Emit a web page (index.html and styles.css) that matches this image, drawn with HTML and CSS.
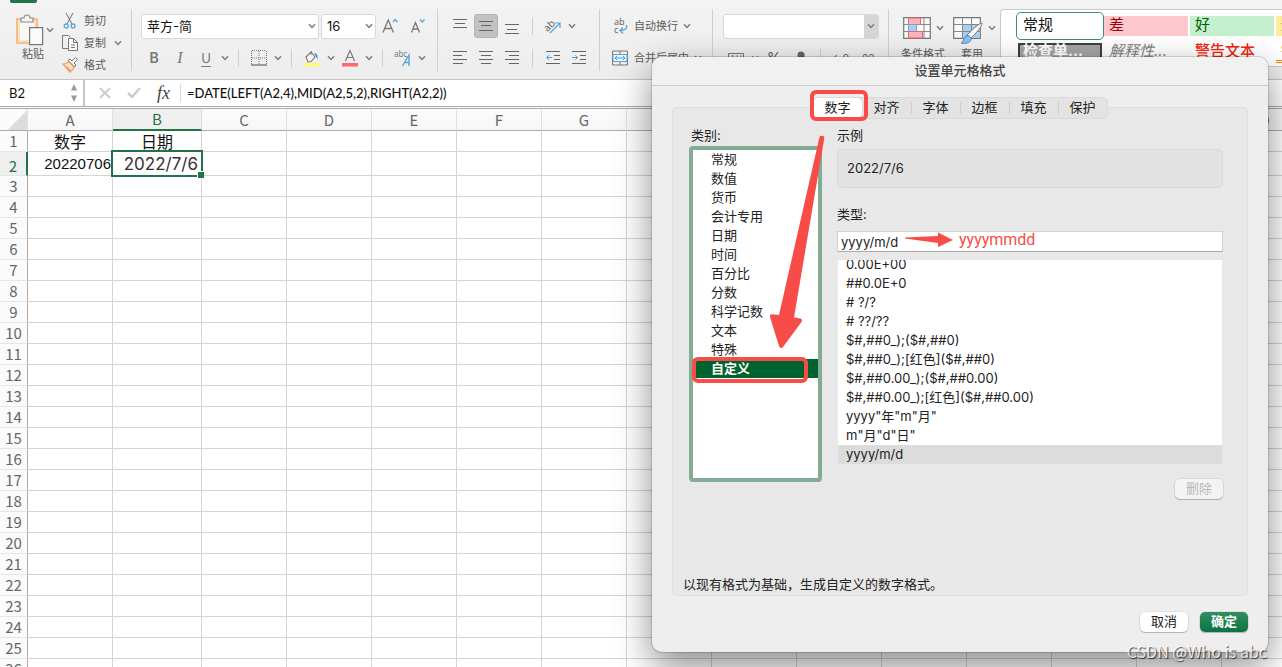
FILE: index.html
```html
<!DOCTYPE html>
<html lang="zh-CN">
<head>
<meta charset="utf-8">
<title>设置单元格格式</title>
<link rel="stylesheet" href="styles.css">
</head>
<body>
<svg class="defs" aria-hidden="true">
  <symbol id="chev" viewBox="0 0 8 6"><path d="M1 1.2 4 4.4 7 1.2" fill="none" stroke="#7c7c7c" stroke-width="1.5"/></symbol>
</svg>
<div class="app">
  <header class="ribbon">
    <span class="active-tab"></span>
    <section class="group clipboard">
      <button class="paste">
        <span class="paste-top">
          <svg width="28" height="32" viewBox="0 0 28 32" fill="none"><path d="M1 5h20v24H1z" fill="#fbe5b8" stroke="#f2b27c" stroke-width="1.6"/><path d="M4 8h14v18H4z" fill="#f7f7f7"/><path d="M5 8V4h3c0-4 6-4 6 0h3v4z" fill="#f7f7f7" stroke="#8a8a8a" stroke-width="1.2"/><path d="M13.600 13.600h13v17h-13z" fill="#fafafa" stroke="#777" stroke-width="1.2"/></svg>
          <svg class="chev"><use href="#chev"/></svg>
        </span>
        <span>粘贴</span>
      </button>
      <div class="clip-list">
        <button><svg width="16" height="18" viewBox="0 0 16 18" fill="none"><path d="M4 1l6 11M11 1 5 12" stroke="#858585" stroke-width="1.1"/><circle cx="4.200" cy="14" r="2" stroke="#5aa5dc" stroke-width="1.300"/><circle cx="11" cy="14" r="2" stroke="#5aa5dc" stroke-width="1.300"/></svg>剪切</button>
        <button><svg width="16" height="18" viewBox="0 0 16 18" fill="none" stroke="#777"><path d="M6 14.500H.5v-13h6l2 2"/><path d="M6.500 4.500h5l4 4v8h-9z" fill="#fafafa"/><path d="M11.500 4.500v4h4M9 11h4M9 13.500h4"/></svg>复制<svg class="chev"><use href="#chev"/></svg></button>
        <button><svg width="16" height="18" viewBox="0 0 16 18" fill="none"><path d="M1 8c3 0 5-1 6-3l5 6c-1 3-3 4-4 5z" fill="#fbe0c0" stroke="#ef9f62" stroke-width="1.2"/><path d="M3 10l3 1 3 4-2 1z" fill="#ef9f62"/><path d="M6 4.500l2-1.500 2 2 3.500-3.500 2 2L12 7l2 2-1.500 2z" fill="#f5f5f5" stroke="#777"/></svg>格式</button>
      </div>
    </section>
    <section class="group font">
      <div class="row boxes">
        <div class="combo family"><select aria-label="字体"><option>苹方-简</option></select><svg class="chev"><use href="#chev"/></svg></div>
        <div class="combo size"><select aria-label="字号"><option>16</option></select><svg class="chev"><use href="#chev"/></svg></div>
        <button class="ib" aria-label="增大字号"><svg width="18" height="18" viewBox="0 0 18 18" fill="none"><path d="M1 15.500 6.200 3l5.200 12.500M3 11.500h6.600" stroke="#7a7a7a" stroke-width="1.300"/><path d="M11 5l2.200-2.500L15.500 5" stroke="#5aa5dc" stroke-width="1.300"/></svg></button>
        <button class="ib" aria-label="减小字号"><svg width="18" height="18" viewBox="0 0 18 18" fill="none"><path d="M1.500 15.500 5.500 5.500l4 10M3 12h5" stroke="#7a7a7a" stroke-width="1.300"/><path d="M10 2.500 12.200 5l2.300-2.500" stroke="#5aa5dc" stroke-width="1.300"/></svg></button>
      </div>
      <div class="row">
        <button class="ib b">B</button><button class="ib i">I</button><button class="ib u">U</button><svg class="chev"><use href="#chev"/></svg>
        <span class="sep"></span>
        <button class="ib" aria-label="边框"><svg width="16" height="16" viewBox="0 0 16 16" fill="none" stroke="#777"><path d="M1 .5h14M.5 1v14M15.500 1v14M8 1v14M1 8h14" stroke-dasharray="1 1"/><path d="M0 15h16" stroke-width="1.400"/></svg></button><svg class="chev"><use href="#chev"/></svg>
        <span class="sep"></span>
        <button class="ib" aria-label="填充颜色"><svg width="18" height="18" viewBox="0 0 18 18" fill="none"><path d="M3 8l5-5 4 5-4 4.500-3 .5z" fill="#f7f7f7" stroke="#777" stroke-width="1.100"/><path d="M8 6V2" stroke="#777"/><path d="M11 4c3 0 4 3 3.500 6-1-1-2-3-3.500-6z" fill="#4f94c9"/><path d="M1 14h16v3.500H1z" fill="#fdf97a"/></svg></button><svg class="chev"><use href="#chev"/></svg>
        <button class="ib" aria-label="字体颜色"><svg width="18" height="18" viewBox="0 0 18 18" fill="none"><path d="M4.500 12 9 1.500 13.500 12M6 8.500h6" stroke="#7a7a7a" stroke-width="1.200"/><path d="M1 14h16v3.500H1z" fill="#fb6a6f"/></svg></button><svg class="chev"><use href="#chev"/></svg>
        <span class="sep"></span>
        <button class="ib" aria-label="拼音"><svg width="18" height="18" viewBox="0 0 18 18"><text x="0" y="8" class="t-abc">abc</text><path d="M8.500 17 15 6v11M10.500 13.500H15" fill="none" stroke="#5aa5dc" stroke-width="1.400"/></svg></button><svg class="chev"><use href="#chev"/></svg>
      </div>
    </section>
    <section class="group align">
      <div class="row">
        <button class="ib" aria-label="顶端对齐"><svg width="14" height="16" viewBox="0 0 14 16" stroke="#666"><path d="M0 1.500h14M2 5.500h10M0 9.500h14"/></svg></button>
        <button class="ib on" aria-label="垂直居中"><svg width="14" height="16" viewBox="0 0 14 16" stroke="#666"><path d="M0 3.500h14M2 7.500h10M0 12.500h14"/></svg></button>
        <button class="ib" aria-label="底端对齐"><svg width="14" height="16" viewBox="0 0 14 16" stroke="#666"><path d="M0 6.500h14M2 11.500h10M0 15.500h14"/></svg></button>
        <span class="sep"></span>
        <button class="ib" aria-label="方向"><svg width="18" height="18" viewBox="0 0 18 18"><text x="1" y="13" class="t-rot" transform="rotate(-45 5 11)">ab</text><path d="M6 16 15.500 6.500M11 6h5v5" fill="none" stroke="#5aa5dc" stroke-width="1.200"/></svg></button><svg class="chev"><use href="#chev"/></svg>
      </div>
      <div class="row">
        <button class="ib" aria-label="左对齐"><svg width="14" height="16" viewBox="0 0 14 16" stroke="#666"><path d="M0 1.500h14M0 5.500h9M0 9.500h14M0 13.500h10"/></svg></button>
        <button class="ib" aria-label="居中"><svg width="14" height="16" viewBox="0 0 14 16" stroke="#666"><path d="M0 1.500h14M2 5.500h10M0 9.500h14M2 13.500h10"/></svg></button>
        <button class="ib" aria-label="右对齐"><svg width="14" height="16" viewBox="0 0 14 16" stroke="#666"><path d="M0 1.500h14M4 5.500h10M0 9.500h14M4 13.500h10"/></svg></button>
        <span class="sep"></span>
        <button class="ib" aria-label="减少缩进"><svg width="14" height="16" viewBox="0 0 14 16" fill="none" stroke="#666"><path d="M0 1.500h14M8 5.500h6M8 9.500h6M0 13.500h14"/><path d="M.8 7.500h5.500M3 5.200.8 7.500 3 9.800" stroke="#4b9bd8"/></svg></button>
        <button class="ib" aria-label="增加缩进"><svg width="14" height="16" viewBox="0 0 14 16" fill="none" stroke="#666"><path d="M0 1.500h14M8 5.500h6M8 9.500h6M0 13.500h14"/><path d="M0 7.500h5.500M3.300 5.200l2.200 2.300-2.200 2.300" stroke="#4b9bd8"/></svg></button>
      </div>
    </section>
    <section class="group wrap">
      <div class="row"><button class="lb"><svg width="16" height="18" viewBox="0 0 16 18"><text x="2" y="8" class="t-wrap">ab</text><text x="2" y="16" class="t-wrap">c</text><path d="M14.500 8c1 4-2 5.500-6.500 5.500M11 10.500l-3 3 3 3" fill="none" stroke="#5aa5dc" stroke-width="1.300"/></svg>自动换行</button><svg class="chev"><use href="#chev"/></svg></div>
      <div class="row"><button class="lb"><svg width="16" height="16" viewBox="0 0 16 16" fill="none"><path d="M.5 1h15v14H.5zM8 1v3M8 12v3" stroke="#777"/><path d="M1 4.500h14v7H1z" fill="#eef6fc" stroke="#5aa5dc"/><path d="M3 8h10M5 6 3 8l2 2M11 6l2 2-2 2" stroke="#4b9bd8"/></svg>合并后居中</button><svg class="chev"><use href="#chev"/></svg></div>
    </section>
    <section class="group number">
      <div class="row"><div class="combo fmt"><select aria-label="数字格式"><option></option></select><span class="drop"><svg class="chev"><use href="#chev"/></svg></span></div></div>
      <div class="row">
        <button class="ib" aria-label="货币"><svg width="16" height="12" viewBox="0 0 16 12" fill="none" stroke="#777"><path d="M.5 1.500h15v9H.5z"/><path d="M3 4h3M8 4h2M12 4h2M3 7h10"/></svg></button><svg class="chev"><use href="#chev"/></svg>
        <button class="ib pct">%</button><button class="ib" aria-label="千位分隔"><svg width="12" height="16" viewBox="0 0 12 16"><circle cx="7" cy="5" r="3.500" fill="#666"/><path d="M10.500 5c0 5-3 7-5 8 2-3 2-4 1.500-6z" fill="#666"/></svg></button>
        <span class="sep"></span>
        <button class="ib dec"><svg width="10" height="10" viewBox="0 0 10 10" fill="none" stroke="#5aa5dc" stroke-width="1.300"><path d="M1 5h8M4 2 1 5l3 3"/></svg>0</button><button class="ib dec">.00</button>
      </div>
    </section>
    <section class="group cond">
      <button class="big"><span class="paste-top"><svg width="28" height="22" viewBox="0 0 28 22" fill="none"><path d="M.7.7h26.600v20.600H.7z" fill="#fafafa" stroke="#777" stroke-width="1.200"/><path d="M0 7.500h28M0 14.500h28M21 0v22M5.500 0v22" stroke="#888"/><path d="M5.500 1h12v6.500h-12z" fill="#ffb3bb" stroke="#e8657a"/><path d="M5.500 7.500h8v7h-8z" fill="#a9cff0" stroke="#6aa6dc"/><path d="M5.500 14.500h14V21h-14z" fill="#ffb3bb" stroke="#e8657a"/></svg><svg class="chev"><use href="#chev"/></svg></span><span>条件格式</span></button>
      <button class="big"><span class="paste-top"><svg width="30" height="27" viewBox="0 0 30 27" fill="none"><path d="M.7.7h26.600v20.600H.7z" fill="#fafafa" stroke="#777" stroke-width="1.200"/><path d="M9 7.500h18V21H9z" fill="#a9cff0"/><path d="M0 7.500h28M0 14.500h28M18.500 0v22M9.500 0v22" stroke="#888"/><path d="M14 18C19 13 25 7 29 6c0 4-6 10-11 15z" fill="#fafafa" stroke="#777"/><path d="M8 26c3-1 2-5 5-7 3-1 6 1 5 4s-6 4-10 3z" fill="#8fc0ea" stroke="#4b8fc9"/></svg><svg class="chev"><use href="#chev"/></svg></span><span>套用</span></button>
    </section>
    <section class="gallery">
      <button class="st normal">常规</button><button class="st bad">差</button><button class="st good">好</button><button class="st neutral">适中</button>
      <button class="st low check">检查单...</button><button class="st low explain">解释性...</button><button class="st low warn">警告文本</button><button class="st low link">链接</button>
    </section>
  </header>

  <div class="formula-bar">
    <div class="name-box"><input aria-label="名称框" value="B2"><svg width="8" height="18" viewBox="0 0 8 18" fill="#9a9a9a"><path d="M1 6.500 4 0l3 6.500zM1 11.500 4 18l3-6.500z"/></svg></div>
    <div class="fx-icons">
      <svg width="12" height="12" viewBox="0 0 12 12" fill="none" stroke="#cdcdcd" stroke-width="2"><path d="M1 1l10 10M11 1 1 11"/></svg>
      <svg width="14" height="12" viewBox="0 0 14 12" fill="none" stroke="#cdcdcd" stroke-width="2.500"><path d="M1 6l4 4 8-9"/></svg>
      <span class="fx">fx</span>
    </div>
    <input class="formula" aria-label="公式" value="=DATE(LEFT(A2,4),MID(A2,5,2),RIGHT(A2,2))">
  </div>

  <main class="sheet">
    <table class="grid"><colgroup id="cols"></colgroup><thead id="head"></thead><tbody id="body"></tbody></table>
  </main>
</div>

<div class="dialog" role="dialog" aria-labelledby="dlg-title">
  <h1 class="dlg-title" id="dlg-title">设置单元格格式</h1>
  <div class="dlg-body">
    <nav class="tabs">
      <button class="tab active">数字</button><button class="tab">对齐</button><button class="tab">字体</button><button class="tab">边框</button><button class="tab">填充</button><button class="tab">保护</button>
    </nav>
    <div class="panel">
      <div class="cols">
        <section class="cat">
          <h2>类别:</h2>
          <ul class="cat-list">
            <li>常规</li><li>数值</li><li>货币</li><li>会计专用</li><li>日期</li><li>时间</li><li>百分比</li><li>分数</li><li>科学记数</li><li>文本</li><li>特殊</li><li class="sel">自定义</li>
          </ul>
        </section>
        <section class="detail">
          <h2>示例</h2>
          <div class="sample">2022/7/6</div>
          <label for="type">类型:</label>
          <input id="type" class="type" value="yyyy/m/d">
          <ul class="fmt-list">
            <li>0.00E+00</li><li>##0.0E+0</li><li># ?/?</li><li># ??/??</li><li>$#,##0_);($#,##0)</li><li>$#,##0_);[红色]($#,##0)</li><li>$#,##0.00_);($#,##0.00)</li><li>$#,##0.00_);[红色]($#,##0.00)</li><li>yyyy"年"m"月"</li><li>m"月"d"日"</li><li class="sel">yyyy/m/d</li>
          </ul>
          <button class="btn" disabled>删除</button>
        </section>
      </div>
      <p class="note">以现有格式为基础，生成自定义的数字格式。</p>
    </div>
    <footer class="actions"><button class="btn">取消</button><button class="btn primary">确定</button></footer>
  </div>
  <span class="mark mark-tab"></span>
  <span class="mark mark-item"></span>
  <svg class="arrows" width="616" height="596" viewBox="652 57 616 596" fill="#f74c47" aria-hidden="true">
    <path d="M819.500 137q.3-1.500 2-1.300l1.500.3q1.500.4 1.300 2L794 317.500l6.500 1q2.500 1 1 3.500L783 347q-2.500 2.500-4-1L770 317q-.5-2.500 2-2.700l7 .7z"/>
    <path d="M905 238.500v-1l33-1.500v-3.500l15 7.500-15 7v-4z"/>
  </svg>
  <span class="hint">yyyymmdd</span>
</div>
<span class="watermark">CSDN @Who is abc</span>
<script src="grid.js"></script>
</body>
</html>
```
FILE: grid.js
```js
const letters = [...'ABCDEFGHIJKLMNO'];
const values = { A1: '数字', B1: '日期', A2: '20220706', B2: '2022/7/6' };

document.getElementById('cols').innerHTML =
  '<col class="c-head">' + letters.map(l => `<col class="${l === 'B' ? 'c-b' : 'c'}">`).join('');
document.getElementById('head').innerHTML =
  '<tr><th class="corner"></th>' +
  letters.map(l => `<th class="${l === 'B' ? 'current' : ''}">${l}</th>`).join('') + '</tr>';

let rows = '';
for (let r = 1; r <= 26; r++) {
  rows += `<tr class="${r === 2 ? 'current' : ''}"><th>${r}</th>`;
  for (const l of letters) {
    const id = l + r;
    rows += `<td class="${values[id] ? 'v-' + id.toLowerCase() : ''}">${values[id] || ''}</td>`;
  }
  rows += '</tr>';
}
document.getElementById('body').innerHTML = rows;
```
FILE: styles.css
```css
* { box-sizing: border-box; }
body {
  margin: 0;
  height: 100vh;
  overflow: hidden;
  position: relative;
  font: 13px/19px Inter, "Noto Sans CJK SC", sans-serif;
  color: #222;
}
button, input, select { font: inherit; color: inherit; margin: 0; padding: 0; border: 0; background: none; appearance: none; }
svg { display: block; flex: none; overflow: visible; }
ul { list-style: none; margin: 0; padding: 0; }
.defs { position: absolute; width: 0; height: 0; }
.app { display: flex; flex-direction: column; height: 100vh; overflow: hidden; }

/* ribbon */
.ribbon {
  position: relative;
  flex: none;
  display: flex;
  align-items: flex-start;
  height: 80px;
  padding-top: 9px;
  background: linear-gradient(#f3f3f3, #ededed);
  border-bottom: 1px solid #c4c4c4;
  font-size: 11px;
  line-height: 16px;
  color: #5c5c5c;
  overflow: hidden;
}
.active-tab { position: absolute; top: 0; left: 10px; width: 27px; height: 3px; background: #217346; border-radius: 0 0 2px 2px; }
.group { flex: none; height: 62px; padding-top: 1px; padding-left: 9px; border-right: 1px solid #cfcfcf; }
.row { display: flex; align-items: center; height: 32px; }
.chev { width: 12px; height: 6px; }
.ib { width: 26px; height: 24px; display: flex; align-items: center; justify-content: center; flex: none; }
.sep { flex: none; width: 1px; height: 18px; margin: 0 7px; background: #cfcfcf; }
.clipboard { width: 132px; padding-left: 16px; display: flex; gap: 5px; }
.paste { width: 41px; display: flex; flex-direction: column; align-items: flex-start; padding-top: 4px; }
.paste > span:last-child { padding-left: 6px; }
.paste-top { display: flex; align-items: center; }
.clip-list { display: flex; flex-direction: column; }
.clip-list button { display: flex; flex: none; align-items: center; gap: 6px; height: 22px; }
.font { width: 306px; }
.boxes { gap: 2px; }
.combo { position: relative; display: flex; align-items: center; height: 25px; background: #fff; border: 1px solid #d9d9d9; border-radius: 3px; font-size: 13px; color: #111; }
.combo select { flex: 1; min-width: 0; height: 23px; padding-left: 5px; }
.combo.family { width: 178px; }
.combo.size { width: 55px; }
.b { font-size: 14px; font-weight: 600; color: #777; }
.i { font: italic 16px "Liberation Serif", serif; color: #777; }
.u { font-size: 13px; color: #777; text-decoration: underline; text-underline-offset: 3px; }
.t-abc { font: 8px "Noto Sans", sans-serif; fill: #777; }
.t-rot { font: 10px "Noto Sans", sans-serif; fill: #666; }
.t-wrap { font: 9px/8px "Noto Sans", sans-serif; fill: #666; }
.align { width: 162px; }
.on { width: 24px; margin: 0 1px; background: #c2c2c2; border: 1px solid #b5b5b5; border-radius: 3px; }
.wrap { width: 113px; padding-left: 12px; }
.lb { display: flex; align-items: center; gap: 6px; }
.wrap .chev { margin-left: 3px; }
.number { width: 176px; padding-left: 10px; }
.combo.fmt { width: 156px; }
.drop { display: flex; align-items: center; justify-content: center; width: 14px; height: 23px; background: #d6d6d6; border-radius: 0 2px 2px 0; }
.drop .chev { width: 10px; }
.pct { font-size: 15px; }
.dec { font-size: 10px; }
.cond { width: 111px; padding: 8px 0 0 12px; display: flex; gap: 8px; border-right: 0; }
.big { display: flex; flex-direction: column; width: 42px; white-space: nowrap; }
.big .paste-top { height: 22px; gap: 3px; padding-left: 2px; align-items: flex-start; }
.big .paste-top .chev { margin-top: 8px; }
.big > span:last-child { padding-top: 7px; width: 42px; text-align: center; }
.gallery {
  flex: 1;
  display: grid;
  grid-template-columns: repeat(4, 84px);
  grid-template-rows: 20px 20px;
  gap: 7px 2px;
  height: 58px;
  padding: 6px 0 0 17px;
  background: #fff;
  border: 1px solid #c9c9c9;
  border-right: 0;
  border-radius: 4px 0 0 0;
  overflow: hidden;
  font-size: 15px;
  line-height: 16px;
}
.st { text-align: left; padding: 0 0 2px 5px; white-space: nowrap; }
.st.low { padding-bottom: 4px; }
.normal { color: #111; outline: 1px solid #3f8f63; outline-offset: 3px; background: #fff; border-radius: 1px; margin: 0 2px; padding-left: 3px; }
.bad { background: #ffc7ce; color: #9c0006; }
.good { background: #c6efce; color: #006100; }
.neutral { background: #ffeb9c; color: #9c5700; }
.check { background: #a5a5a5; color: #fff; font-weight: 700; border: 2px solid #3f3f3f; padding-left: 3px; line-height: 12px; }
.explain { color: #7f7f7f; font-style: italic; }
.warn { color: #f2230c; font-weight: 500; }
.link { color: #fa7d00; border-bottom: 3px double #ff8001; }

/* formula bar */
.formula-bar { flex: none; display: flex; height: 29px; background: #fff; border-bottom: 3px double #a9a9a9; font: 13px/19px Lato, sans-serif; color: #111; }
.name-box { flex: none; display: flex; align-items: center; width: 85px; padding: 0 5px 0 9px; border-right: 2px solid #c6c6c6; }
.name-box input { flex: 1; min-width: 0; }
.fx-icons { flex: none; display: flex; align-items: center; gap: 16px; width: 96px; margin: 4px 6px 4px 0; padding-left: 14px; border-right: 1px solid #d9d9d9; }
.fx { font: italic 18px/18px "Liberation Serif", serif; color: #444; }
.formula { flex: 1; min-width: 0; font-weight: 500; }

/* sheet */
.sheet { flex: 1; min-height: 0; overflow: hidden; background: #fff; }
.grid { table-layout: fixed; width: 1307px; border-collapse: separate; border-spacing: 0; font: 15px/20px "Noto Sans CJK SC", sans-serif; }
.c-head { width: 28px; }
.c { width: 85px; }
.c-b { width: 89px; }
.grid th, .grid td { padding: 0; height: 21px; border-right: 1px solid #d4d4d4; border-bottom: 1px solid #d4d4d4; line-height: 20px; white-space: nowrap; }
.grid th { font-weight: 400; color: #666; background: #fbfbfb; }
.grid thead th { height: 22px; border-bottom-color: #ababab; border-right-color: #e0e0e0; background: linear-gradient(#fbfbfb, #f7f7f7); }
.grid tbody th { border-right-color: #ababab; border-bottom-color: #e6e6e6; }
.grid thead th.current { background: #efefef; color: #217346; border-bottom: 2px solid #217346; }
.grid tr.current th { height: 24px; color: #217346; background: #efefef; border-right: 2px solid #217346; vertical-align: bottom; line-height: 18px; }
.corner { background: linear-gradient(135deg, #fbfbfb 60%, #dcdcdc 60%) !important; }
.v-a1, .v-b1 { text-align: center; font-size: 16px; color: #111; }
.v-a2 { text-align: right; font: 15px "Liberation Sans", sans-serif; color: #111; }
.grid td.v-a2 { padding-right: 1px; }
.v-b2 { position: relative; text-align: right; font: 17px Inter, sans-serif; color: #333; }
.grid td.v-b2 { padding-right: 3px; }
.v-b2::before { content: ""; position: absolute; inset: -2px; border: 2px solid #217346; }
.v-b2::after { content: ""; position: absolute; right: -3px; bottom: -3px; width: 6px; height: 6px; background: #217346; border: solid #fff; border-width: 1px 0 0 1px; }

/* dialog */
.dialog {
  position: absolute;
  top: 57px;
  right: 14px;
  width: 616px;
  background: #eeeeee;
  border-radius: 10px;
  box-shadow: 0 0 0 1px rgba(0, 0, 0, .14), 0 14px 36px rgba(0, 0, 0, .46);
}
.dlg-title { margin: 0; height: 29px; border-bottom: 1px solid #cbcbcb; background: #f1f1f1; border-radius: 10px 10px 0 0; font-size: 13px; font-weight: 500; line-height: 27px; text-align: center; color: #444; }
.dlg-body { padding: 11px 20px 20px; display: flex; flex-direction: column; }
.tabs { align-self: center; display: flex; height: 22px; background: #e3e3e3; border: 1px solid #dadada; border-radius: 6px; z-index: 1; margin-bottom: -12px; }
.tab { width: 49px; height: 20px; padding-bottom: 2px; line-height: 18px; position: relative; }
.tab + .tab + .tab::before { content: ""; position: absolute; left: 0; top: 4px; height: 12px; border-left: 1px solid #cdcdcd; }
.tab.active { background: #fff; border-radius: 5px; box-shadow: 0 1px 2px rgba(0, 0, 0, .2); }
.panel { background: #e8e8e8; border: 1px solid #dfdfdf; border-radius: 5px; padding: 18px 24px 1px 10px; }
.cols { display: flex; gap: 15px; padding-left: 6px; }
h2, .detail label { margin: 0; font-size: 13px; font-weight: 400; line-height: 19px; }
.cat { width: 133px; flex: none; }
.cat h2 { padding-left: 2px; }
.cat-list { margin-top: 1px; height: 336px; background: #fff; border: 4px solid #84ab94; border-radius: 4px; }
.cat-list li { height: 19px; padding-left: 18px; }
.cat-list .sel { background: #00632f; color: #fff; font-weight: 700; }
.detail { flex: 1; display: flex; flex-direction: column; min-width: 0; }
.sample { height: 39px; margin: 4px 0 17px; padding: 9px; background: #e2e2e2; border: 1px solid #dadada; border-radius: 5px; }
.type { height: 21px; margin-top: 7px; padding-left: 3px; background: #fff; border: 1px solid #d2d2d2; border-bottom-color: #a9a9a9; }
.fmt-list { height: 204px; margin: 8px 1px 15px; display: flex; flex-direction: column; justify-content: flex-end; overflow: hidden; background: #fff; }
.fmt-list li { flex: none; height: 19px; padding-left: 8px; }
.fmt-list .sel { background: #dcdcdc; }
.btn { width: 48px; height: 20px; padding-bottom: 2px; border-radius: 5px; background: #fff; box-shadow: 0 0 0 1px rgba(0, 0, 0, .06), 0 1px 1px rgba(0, 0, 0, .2); line-height: 18px; }
.btn:disabled { align-self: flex-end; background: #f3f3f3; color: #b9b9b9; }
.btn.primary { background: linear-gradient(#2f8f61, #0b7341); color: #fff; font-weight: 700; }
.note { margin: 75px 0 0; line-height: 20px; }
.actions { display: flex; justify-content: flex-end; gap: 12px; margin-top: 16px; }

/* annotations over the dialog */
.mark { position: absolute; z-index: 2; border: 4px solid #f74c47; border-radius: 6px; }
.mark-tab { left: 158px; top: 33px; width: 58px; height: 31px; }
.mark-item { left: 40px; top: 300px; width: 116px; height: 26px; }
.arrows { position: absolute; z-index: 2; left: 0; top: 0; pointer-events: none; }
.hint { position: absolute; left: 307px; top: 173px; font: 16px/20px Roboto, sans-serif; color: #f74c47; }
.watermark { position: absolute; right: 15px; bottom: 5px; font: 16px/22px "Noto Sans CJK SC", sans-serif; color: rgba(255, 255, 255, .8); text-shadow: 1px 1px 1px rgba(0, 0, 0, .7); }
```
